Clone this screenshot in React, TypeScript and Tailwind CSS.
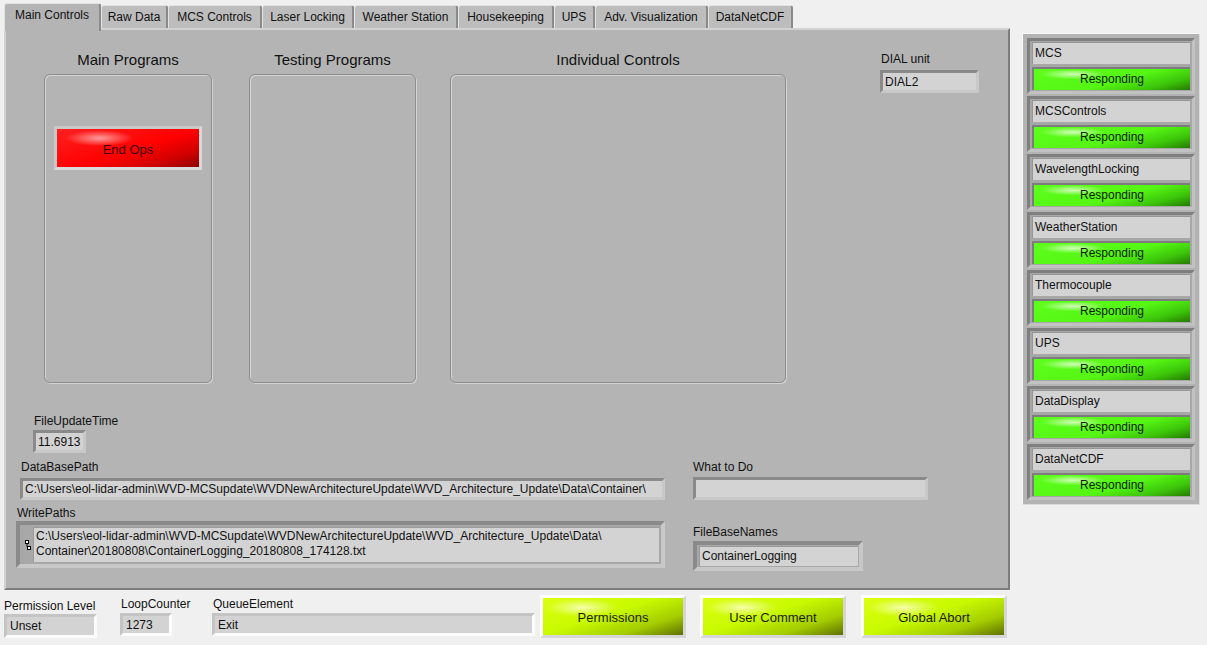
import React from 'react';

const tabs = [
  { name: 'Main Controls', w: 'w-[97px]', active: true },
  { name: 'Raw Data', w: 'w-[67px]' },
  { name: 'MCS Controls', w: 'w-[94px]' },
  { name: 'Laser Locking', w: 'w-[92px]' },
  { name: 'Weather Station', w: 'w-[104px]' },
  { name: 'Housekeeping', w: 'w-[96px]' },
  { name: 'UPS', w: 'w-[41px]' },
  { name: 'Adv. Visualization', w: 'w-[113px]' },
  { name: 'DataNetCDF', w: 'w-[85px]' },
];

const modules = ['MCS', 'MCSControls', 'WavelengthLocking', 'WeatherStation', 'Thermocouple', 'UPS', 'DataDisplay', 'DataNetCDF'];

// sunken LabVIEW style string indicator
function Field({ className, children }: { className: string; children?: React.ReactNode }) {
  return (
    <div
      className={`border-[3px] border-t-[#8a8a8a] border-l-[#8a8a8a] border-r-[#c8c8c8] border-b-[#c8c8c8] bg-[#d3d3d3] px-[2px] text-[12px] leading-[16px] text-[#111] whitespace-nowrap overflow-hidden flex items-center ${className}`}
    >
      {children}
    </div>
  );
}

function PageField({ className, children }: { className: string; children?: React.ReactNode }) {
  return (
    <div
      className={`border-[3px] border-t-[#c4c4c4] border-l-[#c4c4c4] border-r-[#fcfcfc] border-b-[#fcfcfc] bg-[#d3d3d3] px-[3px] text-[12px] leading-[16px] text-[#111] whitespace-nowrap overflow-hidden flex items-center ${className}`}
    >
      {children}
    </div>
  );
}

function Label({ children, className = '' }: { children: React.ReactNode; className?: string }) {
  return <div className={`text-[12px] leading-[16px] text-[#111] whitespace-nowrap ${className}`}>{children}</div>;
}

function YellowButton({ label, className }: { label: string; className: string }) {
  return (
    <div className={`w-[146px] h-[43px] shrink-0 border-[3px] border-t-[#fdfdfd] border-l-[#fdfdfd] border-r-[#d6d6d6] border-b-[#d6d6d6] bg-[#e8e8e8] ${className}`}>
      <div className="w-full h-full pt-[3px] flex items-center justify-center text-[13px] text-[#1c1c00] bg-[radial-gradient(ellipse_36px_9px_at_28%_26%,rgba(255,255,210,0.8),rgba(255,255,160,0)),linear-gradient(162deg,#dcff10_0%,#c8fa00_45%,#a4cc00_75%,#5f7000_100%)]">
        {label}
      </div>
    </div>
  );
}

export default function App() {
  return (
    <div className="w-[1207px] h-[645px] bg-[#f0f0f0] flex overflow-hidden font-['Liberation_Sans',Arial,sans-serif] text-[#111]">
      <div className="w-[1010px] shrink-0 flex flex-col">
        {/* tab strip */}
        <div className="h-[28px] pl-[4px] flex items-end">
          {tabs.map((t) =>
            t.active ? (
              <div
                key={t.name}
                className={`${t.w} h-[28px] -mb-[3px] relative z-10 bg-[#b4b4b4] border-t border-l border-[#e2e2e2] border-r-2 border-r-[#8a8a8a] rounded-t-[3px] text-[12px] leading-[22px] text-center`}
              >
                {t.name}
              </div>
            ) : (
              <div
                key={t.name}
                className={`${t.w} h-[23px] bg-[#bdbdbd] border-t border-l border-[#e2e2e2] border-r-2 border-r-[#8a8a8a] rounded-t-[3px] text-[12px] leading-[22px] text-center`}
              >
                {t.name}
              </div>
            )
          )}
        </div>

        {/* tab page */}
        <div className="ml-[4px] w-[1006px] h-[562px] bg-[#b4b4b4] border-t-2 border-l-2 border-t-[#d2d2d2] border-l-[#d2d2d2] border-r-2 border-b-2 border-r-[#7e7e7e] border-b-[#7e7e7e] flex flex-col">
          <div className="flex pt-[20px] pl-[38px]">
            <div className="w-[168px] flex flex-col items-center">
              <div className="h-[20px] text-[15px] leading-[20px] mb-[4px]">Main Programs</div>
              <div className="w-[168px] h-[309px] rounded-[6px] border border-[#8e8e8e] shadow-[inset_1px_1px_0_#d4d4d4,1px_1px_0_#d4d4d4] pt-[51px] pl-[9px]">
                <div className="w-[148px] h-[44px] border-[3px] border-t-[#c9c9c9] border-l-[#c9c9c9] border-r-[#d9d9d9] border-b-[#d9d9d9] bg-[#cfcfcf]">
                  <div className="w-full h-full pt-[3px] flex items-center justify-center text-[13px] text-[#3a0000] bg-[radial-gradient(ellipse_34px_8px_at_30%_24%,rgba(255,190,190,0.8),rgba(255,80,80,0)),linear-gradient(162deg,#ff2020_0%,#ff0000_55%,#d00000_80%,#8e0000_100%)]">
                    End Ops
                  </div>
                </div>
              </div>
            </div>
            <div className="ml-[37px] w-[167px] flex flex-col items-center">
              <div className="h-[20px] text-[15px] leading-[20px] mb-[4px]">Testing Programs</div>
              <div className="w-[167px] h-[309px] rounded-[6px] border border-[#8e8e8e] shadow-[inset_1px_1px_0_#d4d4d4,1px_1px_0_#d4d4d4]" />
            </div>
            <div className="ml-[34px] w-[336px] flex flex-col items-center">
              <div className="h-[20px] text-[15px] leading-[20px] mb-[4px]">Individual Controls</div>
              <div className="w-[336px] h-[309px] rounded-[6px] border border-[#8e8e8e] shadow-[inset_1px_1px_0_#d4d4d4,1px_1px_0_#d4d4d4]" />
            </div>
            <div className="ml-[94px] pt-[1px]">
              <Label className="pl-[1px]">DIAL unit</Label>
              <Field className="mt-[3px] w-[99px] h-[23px]">DIAL2</Field>
            </div>
          </div>

          <div className="mt-[30px] ml-[27px]">
            <Label className="pl-[1px]">FileUpdateTime</Label>
            <Field className="mt-[1px] w-[53px] h-[23px]">11.6913</Field>
          </div>

          <div className="mt-[6px] ml-[14px] flex">
            <div>
              <Label className="pl-[1px]">DataBasePath</Label>
              <Field className="mt-[3px] w-[645px] h-[22px]">
                C:\Users\eol-lidar-admin\WVD-MCSupdate\WVDNewArchitectureUpdate\WVD_Architecture_Update\Data\Container\
              </Field>
            </div>
            <div className="ml-[28px]">
              <Label>What to Do</Label>
              <Field className="mt-[2px] w-[235px] h-[23px]" />
            </div>
          </div>

          <div className="mt-[5px] ml-[10px] flex">
            <div>
              <Label className="pl-[1px]">WritePaths</Label>
              <div className="w-[649px] h-[47px] border-[4px] border-t-[#8a8a8a] border-l-[#8a8a8a] border-r-[#c8c8c8] border-b-[#c8c8c8] bg-[#a8a8a8] p-[2px] flex">
                <div className="w-[11px] flex items-center justify-center">
                  <svg width="6" height="10" viewBox="0 0 6 10">
                    <rect x="0.5" y="0.5" width="3" height="3" fill="#fff" stroke="#000" strokeWidth="1" />
                    <rect x="2.5" y="6.5" width="3" height="3" fill="#fff" stroke="#000" strokeWidth="1" />
                    <line x1="2" y1="4" x2="2" y2="7" stroke="#000" strokeWidth="1" />
                  </svg>
                </div>
                <div className="flex-1 bg-[#d3d3d3] border-t border-l border-[#9a9a9a] px-[2px] pt-[1px] text-[12px] leading-[15px] whitespace-nowrap overflow-hidden">
                  <div>C:\Users\eol-lidar-admin\WVD-MCSupdate\WVDNewArchitectureUpdate\WVD_Architecture_Update\Data\</div>
                  <div>Container\20180808\ContainerLogging_20180808_174128.txt</div>
                </div>
              </div>
            </div>
            <div className="ml-[28px] mt-[19px]">
              <Label>FileBaseNames</Label>
              <div className="mt-[1px] w-[170px] h-[30px] border-[4px] border-t-[#8a8a8a] border-l-[#8a8a8a] border-r-[#c8c8c8] border-b-[#c8c8c8] bg-[#a8a8a8] p-[1px] pl-[2px]">
                <div className="w-full h-full bg-[#d3d3d3] border-t border-l border-[#9a9a9a] px-[2px] text-[12px] leading-[19px]">
                  ContainerLogging
                </div>
              </div>
            </div>
          </div>
        </div>

        {/* controls under the tab page */}
        <div className="flex pl-[4px]">
          <div className="w-[116px] shrink-0 pt-[8px]">
            <Label className="leading-[15px]">Permission Level</Label>
            <PageField className="w-[93px] h-[24px]">Unset</PageField>
          </div>
          <div className="w-[92px] shrink-0 pt-[6px]">
            <Label className="leading-[15px] pl-[1px]">LoopCounter</Label>
            <PageField className="mt-[1px] w-[52px] h-[23px]">1273</PageField>
          </div>
          <div className="w-[323px] shrink-0 pt-[6px]">
            <Label className="leading-[15px] pl-[1px]">QueueElement</Label>
            <PageField className="mt-[1px] w-[323px] h-[23px]">Exit</PageField>
          </div>
          <YellowButton label="Permissions" className="ml-[5px] mt-[5px]" />
          <YellowButton label="User Comment" className="ml-[14px] mt-[5px]" />
          <YellowButton label="Global Abort" className="ml-[15px] mt-[5px]" />
        </div>
      </div>

      {/* module status cluster */}
      <div className="ml-[12px] mt-[33px] w-[178px] h-[472px] shrink-0 border border-t-[#fafafa] border-l-[#fafafa] border-r-[#dcdcdc] border-b-[#dcdcdc] bg-[#b3b3b3] p-[4px] flex flex-col gap-[2px]">
        {modules.map((m) => (
          <div
            key={m}
            className="h-[56px] border-[3px] border-t-[#7f7f7f] border-l-[#7f7f7f] border-r-[#c2c2c2] border-b-[#c2c2c2] bg-[#a7a7a7] px-[2px] pt-[1px] flex flex-col gap-[3px]"
          >
            <div className="h-[22px] bg-[#d3d3d3] border-t border-l border-[#969696] px-[2px] text-[12px] leading-[20px] whitespace-nowrap">
              {m}
            </div>
            <div className="h-[23px] border-t-2 border-l-2 border-[#7c7c7c] text-[12px] leading-[21px] text-center text-[#0c1a00] bg-[radial-gradient(ellipse_32px_5px_at_25%_25%,rgba(220,255,200,0.9),rgba(120,255,60,0)),linear-gradient(165deg,#5eff1c_0%,#55f514_55%,#3cc40a_80%,#247a00_100%)]">
              Responding
            </div>
          </div>
        ))}
      </div>
    </div>
  );
}
